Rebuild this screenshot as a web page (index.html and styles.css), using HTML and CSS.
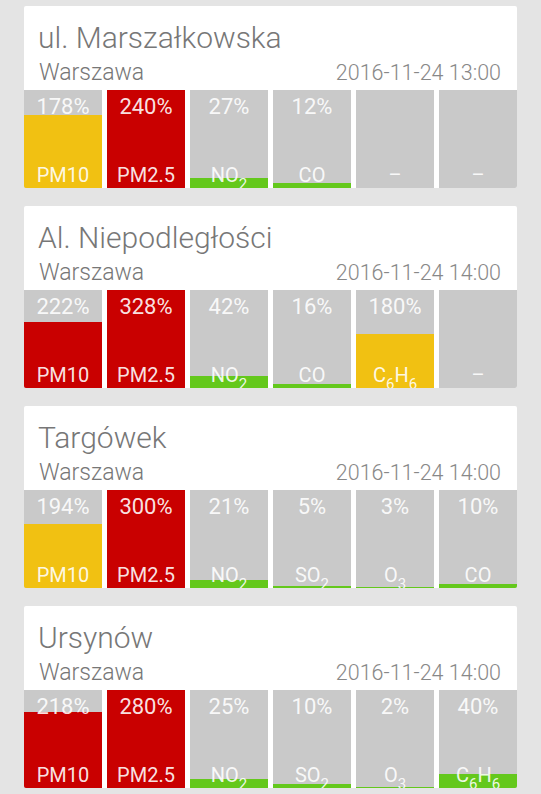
FILE: index.html
```html
<!DOCTYPE html>
<html lang="pl">
<head>
    <meta charset="UTF-8">
    <meta name="viewport" content="width=device-width, initial-scale=1.0">
    <title>Jakość powietrza</title>
    <link rel="stylesheet" href="styles.css">
</head>
<body>
    <div class="list">
        <div class="card">
            <div class="name">ul. Marszałkowska</div>
            <div class="meta">
                <span class="city">Warszawa</span>
                <span class="date">2016-11-24 13:00</span>
            </div>
            <div class="tiles">
                <div class="tile"><div class="fill yellow" style="height:73px"></div><span class="pct">178%</span><span class="label">PM10</span></div>
                <div class="tile"><div class="fill red" style="height:98px"></div><span class="pct">240%</span><span class="label">PM2.5</span></div>
                <div class="tile"><div class="fill green" style="height:10px"></div><span class="pct">27%</span><span class="label">NO<sub>2</sub></span></div>
                <div class="tile"><div class="fill green" style="height:5px"></div><span class="pct">12%</span><span class="label">CO</span></div>
                <div class="tile"><span class="pct"></span><span class="label">–</span></div>
                <div class="tile"><span class="pct"></span><span class="label">–</span></div>
            </div>
        </div>

        <div class="card">
            <div class="name">Al. Niepodległości</div>
            <div class="meta">
                <span class="city">Warszawa</span>
                <span class="date">2016-11-24 14:00</span>
            </div>
            <div class="tiles">
                <div class="tile"><div class="fill red" style="height:66px"></div><span class="pct">222%</span><span class="label">PM10</span></div>
                <div class="tile"><div class="fill red" style="height:98px"></div><span class="pct">328%</span><span class="label">PM2.5</span></div>
                <div class="tile"><div class="fill green" style="height:12px"></div><span class="pct">42%</span><span class="label">NO<sub>2</sub></span></div>
                <div class="tile"><div class="fill green" style="height:4px"></div><span class="pct">16%</span><span class="label">CO</span></div>
                <div class="tile"><div class="fill yellow" style="height:54px"></div><span class="pct">180%</span><span class="label">C<sub>6</sub>H<sub>6</sub></span></div>
                <div class="tile"><span class="pct"></span><span class="label">–</span></div>
            </div>
        </div>

        <div class="card">
            <div class="name">Targówek</div>
            <div class="meta">
                <span class="city">Warszawa</span>
                <span class="date">2016-11-24 14:00</span>
            </div>
            <div class="tiles">
                <div class="tile"><div class="fill yellow" style="height:64px"></div><span class="pct">194%</span><span class="label">PM10</span></div>
                <div class="tile"><div class="fill red" style="height:98px"></div><span class="pct">300%</span><span class="label">PM2.5</span></div>
                <div class="tile"><div class="fill green" style="height:8px"></div><span class="pct">21%</span><span class="label">NO<sub>2</sub></span></div>
                <div class="tile"><div class="fill green" style="height:2px"></div><span class="pct">5%</span><span class="label">SO<sub>2</sub></span></div>
                <div class="tile"><div class="fill green" style="height:1px"></div><span class="pct">3%</span><span class="label">O<sub>3</sub></span></div>
                <div class="tile"><div class="fill green" style="height:4px"></div><span class="pct">10%</span><span class="label">CO</span></div>
            </div>
        </div>

        <div class="card">
            <div class="name">Ursynów</div>
            <div class="meta">
                <span class="city">Warszawa</span>
                <span class="date">2016-11-24 14:00</span>
            </div>
            <div class="tiles">
                <div class="tile"><div class="fill red" style="height:76px"></div><span class="pct">218%</span><span class="label">PM10</span></div>
                <div class="tile"><div class="fill red" style="height:98px"></div><span class="pct">280%</span><span class="label">PM2.5</span></div>
                <div class="tile"><div class="fill green" style="height:9px"></div><span class="pct">25%</span><span class="label">NO<sub>2</sub></span></div>
                <div class="tile"><div class="fill green" style="height:4px"></div><span class="pct">10%</span><span class="label">SO<sub>2</sub></span></div>
                <div class="tile"><div class="fill green" style="height:1px"></div><span class="pct">2%</span><span class="label">O<sub>3</sub></span></div>
                <div class="tile"><div class="fill green" style="height:14px"></div><span class="pct">40%</span><span class="label">C<sub>6</sub>H<sub>6</sub></span></div>
            </div>
        </div>
    </div>
</body>
</html>
```

FILE: styles.css
```css
*{
    margin:0;
    padding:0;
    box-sizing:border-box;
}

body{
    background-color:#e4e4e4;
    font-family:Roboto, "Noto Sans", sans-serif;
}

.list{
    display:flex;
    flex-direction:column;
    gap:18px;
    padding:6px 24px 0 24px;
}

.card{
    background-color:#fff;
    border-radius:2px;
    overflow:hidden;
}

.name{
    padding:15px 16px 0 14px;
    font:300 30px/34px "Roboto Light", Roboto, sans-serif;
    color:#777;
}

.meta{
    display:flex;
    justify-content:space-between;
    align-items:baseline;
    margin-top:4px;
    padding:0 16px 3px 15px;
    line-height:28px;
    font-family:"Roboto Light", Roboto, sans-serif;
    font-weight:300;
}
.city{
    font-size:23px;
    color:#777;
}
.date{
    font-size:21.5px;
    color:#888;
}

.tiles{
    display:grid;
    grid-template-columns:repeat(6, 1fr);
    gap:5px;
}

.tile{
    position:relative;
    height:98px;
    background-color:#c9c9c9;
    overflow:hidden;
    display:flex;
    flex-direction:column;
    justify-content:space-between;
    align-items:center;
    color:rgba(255,255,255,0.9);
}

.fill{
    position:absolute;
    left:0;
    right:0;
    bottom:0;
}
.red{ background-color:#c90000; }
.yellow{ background-color:#f1c112; }
.green{ background-color:#64c81c; }

.pct{
    position:relative;
    padding-top:6px;
    font:400 22px/22px Roboto, sans-serif;
}

.label{
    position:relative;
    margin-bottom:3px;
    font:400 20px/20px Roboto, sans-serif;
}
.label sub{
    font-size:15px;
    line-height:0;
    vertical-align:-7px;
}
```
